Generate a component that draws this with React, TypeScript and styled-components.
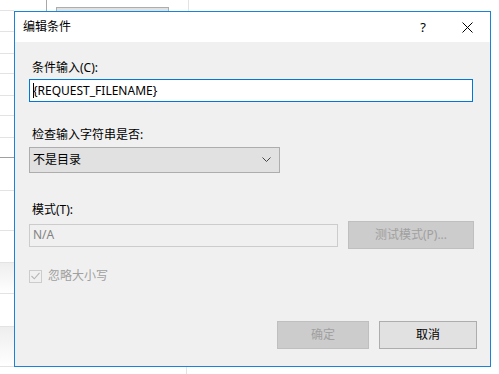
import React from "react";
import styled, { createGlobalStyle } from "styled-components";

const Global = createGlobalStyle`
  html, body { margin: 0; padding: 0; background: #ffffff; }
  body { font-family: "Noto Sans", "Noto Sans CJK SC", sans-serif; }
`;

const UI_FONT = `"Noto Sans", "Noto Sans CJK SC", sans-serif`;

const Screen = styled.div`
  position: relative;
  width: 499px;
  height: 374px;
  overflow: hidden;
  background: #ffffff;
  display: flex;
  flex-direction: column;
`;

/* ---------- underlying window (partly hidden by the dialog) ---------- */
const TopStrip = styled.div`
  height: 11px;
  display: flex;
  flex-shrink: 0;
`;

const TopLeftCell = styled.div`
  width: 47px;
  border-right: 1px solid #a8a8a8;
  box-sizing: border-box;
  display: flex;
  flex-direction: column;
`;

const TopLeftLine = styled.div`
  margin-top: 10px;
  width: 14px;
  border-top: 1px solid #e3e3e3;
`;

const GhostButton = styled.div`
  margin-left: 9px;
  margin-top: 7px;
  width: 111px;
  height: 8px;
  background: #e1e1e1;
  border: 1px solid #adadad;
  border-bottom: none;
`;

const ColumnDivider = styled.div`
  margin-left: 19px;
  width: 1px;
  background: #e3e3e3;
`;

const Lower = styled.div`
  flex: 1;
  display: flex;
`;

const LeftList = styled.div`
  width: 14px;
  display: flex;
  flex-direction: column;
`;

const ListRow = styled.div<{ $h: number; $line?: string; $fade?: boolean }>`
  height: ${(p) => p.$h}px;
  box-sizing: border-box;
  border-bottom: 1px solid ${(p) => p.$line || "#e3e3e3"};
  background: ${(p) =>
    p.$fade ? "linear-gradient(#eeeeee, #ffffff)" : "transparent"};
`;

const RightArea = styled.div`
  flex: 1;
  display: flex;
  align-items: flex-end;
`;

const BottomDivider = styled.div`
  margin-left: 172px;
  width: 1px;
  height: 8px;
  background: #e3e3e3;
`;

/* ---------- dialog window ---------- */
const Dialog = styled.div`
  position: absolute;
  left: 14px;
  top: 11px;
  width: 477px;
  height: 356px;
  box-sizing: border-box;
  border: 1px solid #1883d7;
  background: #f0f0f0;
  display: flex;
  flex-direction: column;
  font-family: ${UI_FONT};
  font-size: 12px;
  color: #000000;
`;

const TitleBar = styled.div`
  height: 30px;
  background: #ffffff;
  display: flex;
  align-items: center;
  padding-left: 8px;
  flex-shrink: 0;
`;

const Title = styled.div`
  flex: 1;
  font-size: 12px;
  line-height: 16px;
  color: #000;
`;

const TitleButton = styled.div<{ $w: number }>`
  width: ${(p) => p.$w}px;
  height: 30px;
  display: flex;
  align-items: center;
  justify-content: center;
  font-size: 13px;
  color: #000;
`;

const Body = styled.div`
  flex: 1;
  display: flex;
  flex-direction: column;
  padding: 18px 0 0 14px;
`;

const Label = styled.div<{ $mt: number; $disabled?: boolean; $pl?: number }>`
  margin-top: ${(p) => p.$mt}px;
  padding-left: ${(p) => (p.$pl ?? 3)}px;
  line-height: 16px;
  height: 16px;
  color: ${(p) => (p.$disabled ? "#a0a0a0" : "#000")};
`;

const TextInput = styled.div<{ $w: number; $mt: number; $focused?: boolean; $disabled?: boolean }>`
  margin-top: ${(p) => p.$mt}px;
  width: ${(p) => p.$w}px;
  height: 23px;
  box-sizing: border-box;
  border: 1px solid
    ${(p) => (p.$focused ? "#0078d7" : p.$disabled ? "#cccccc" : "#7a7a7a")};
  background: ${(p) => (p.$disabled ? "#f0f0f0" : "#ffffff")};
  color: ${(p) => (p.$disabled ? "#838383" : "#000")};
  display: flex;
  align-items: center;
  padding-left: 3px;
  line-height: 16px;
  position: relative;
`;

const Caret = styled.span`
  position: absolute;
  left: 3px;
  top: 3px;
  width: 1px;
  height: 15px;
  background: #000;
`;

const Select = styled.div`
  margin-top: 4px;
  width: 251px;
  height: 26px;
  box-sizing: border-box;
  border: 1px solid #adadad;
  background: #e1e1e1;
  display: flex;
  align-items: center;
  padding-left: 3px;
  padding-right: 8px;
`;

const SelectText = styled.div`
  flex: 1;
  line-height: 16px;
`;

const PatternRow = styled.div`
  margin-top: 3px;
  display: flex;
  align-items: center;
  gap: 10px;
  height: 28px;
`;

const Button = styled.div<{ $w: number; $disabled?: boolean }>`
  width: ${(p) => p.$w}px;
  height: 28px;
  box-sizing: border-box;
  border: 1px solid ${(p) => (p.$disabled ? "#bfbfbf" : "#adadad")};
  background: ${(p) => (p.$disabled ? "#cccccc" : "#e1e1e1")};
  color: ${(p) => (p.$disabled ? "#a0a0a0" : "#000")};
  display: flex;
  align-items: center;
  justify-content: center;
  line-height: 16px;
`;

const CheckRow = styled.div`
  margin-top: 19px;
  height: 16px;
  display: flex;
  align-items: center;
  gap: 6px;
`;

const CheckBox = styled.div`
  width: 13px;
  height: 13px;
  box-sizing: border-box;
  border: 1px solid #cccccc;
  background: #f0f0f0;
  display: flex;
  align-items: center;
  justify-content: center;
`;

const Footer = styled.div`
  margin-top: 37px;
  display: flex;
  gap: 10px;
  padding-left: 248px;
`;

export default function App() {
  return (
    <>
      <Global />
      <Screen>
        <TopStrip>
          <TopLeftCell>
            <TopLeftLine />
          </TopLeftCell>
          <GhostButton />
          <ColumnDivider />
        </TopStrip>
        <Lower>
          <LeftList>
            <ListRow $h={21} />
            <ListRow $h={22} />
            <ListRow $h={20} />
            <ListRow $h={22} />
            <ListRow $h={20} />
            <ListRow $h={22} />
            <ListRow $h={20} $line="#a0a0a0" />
            <ListRow $h={33} />
            <ListRow $h={40} />
            <ListRow $h={32} />
            <ListRow $h={31} $fade />
            <ListRow $h={33} />
            <ListRow $h={40} $fade />
          </LeftList>
          <RightArea>
            <BottomDivider />
          </RightArea>
        </Lower>

        <Dialog>
          <TitleBar>
            <Title>编辑条件</Title>
            <TitleButton $w={42}>?</TitleButton>
            <TitleButton $w={46}>
              <svg width="11" height="11" viewBox="0 0 11 11">
                <path d="M0.5 0.5 L10.5 10.5 M10.5 0.5 L0.5 10.5" stroke="#000" strokeWidth="1" fill="none" />
              </svg>
            </TitleButton>
          </TitleBar>
          <Body>
            <Label $mt={0}>条件输入(C):</Label>
            <TextInput $w={444} $mt={3} $focused>
              <Caret />
              {"{REQUEST_FILENAME}"}
            </TextInput>

            <Label $mt={25}>检查输入字符串是否:</Label>
            <Select>
              <SelectText>不是目录</SelectText>
              <svg width="9" height="6" viewBox="0 0 9 6">
                <path d="M0.5 0.5 L4.5 4.5 L8.5 0.5" stroke="#444" strokeWidth="1" fill="none" />
              </svg>
            </Select>

            <Label $mt={29}>模式(T):</Label>
            <PatternRow>
              <TextInput $w={309} $mt={0} $disabled>
                N/A
              </TextInput>
              <Button $w={126} $disabled>
                测试模式(P)...
              </Button>
            </PatternRow>

            <CheckRow>
              <CheckBox>
                <svg width="9" height="8" viewBox="0 0 9 8">
                  <path d="M0.5 4 L3.3 6.8 L8.5 0.8" stroke="#b5b5b5" strokeWidth="1.1" fill="none" />
                </svg>
              </CheckBox>
              <Label $mt={0} $disabled $pl={0}>
                忽略大小写
              </Label>
            </CheckRow>

            <Footer>
              <Button $w={92} $disabled>
                确定
              </Button>
              <Button $w={98}>取消</Button>
            </Footer>
          </Body>
        </Dialog>
      </Screen>
    </>
  );
}
